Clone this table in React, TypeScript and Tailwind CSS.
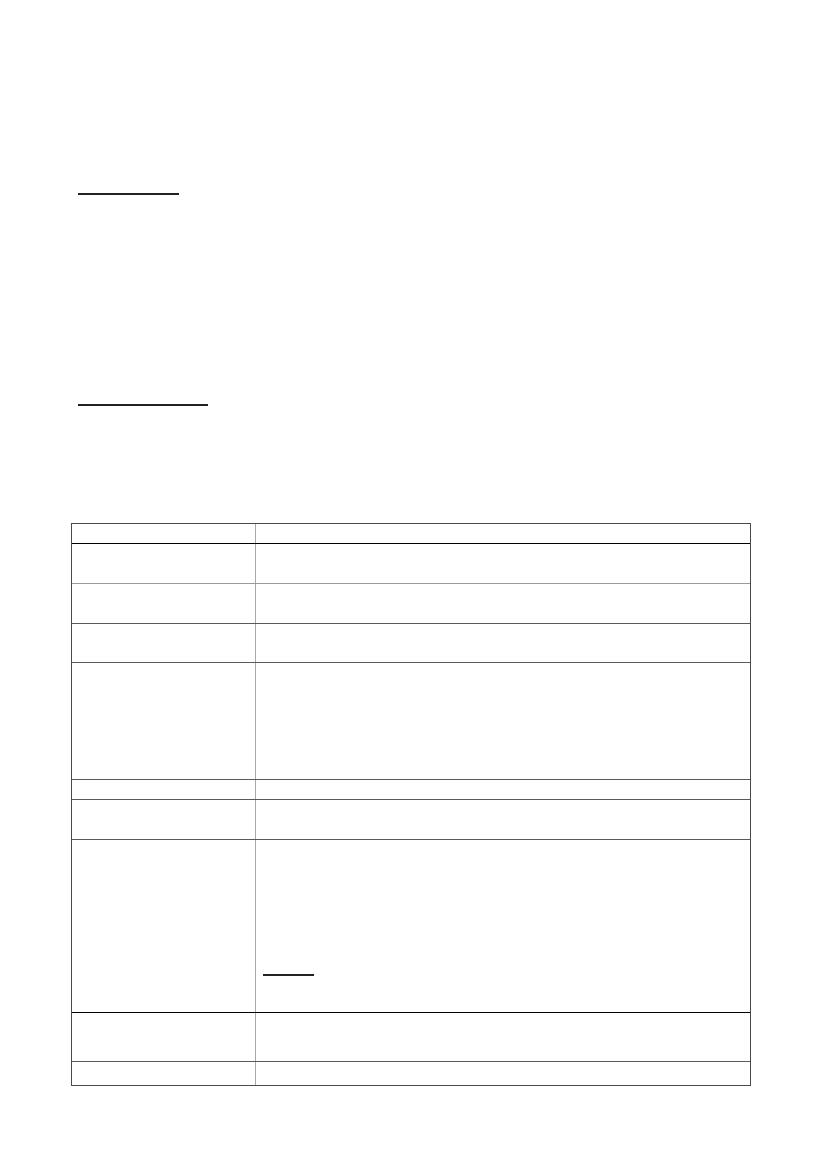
const rows = [
  { h: 'h-[20px]', line: 'border-black' },
  { h: 'h-[40px]', line: 'border-[#9a9a9a]' },
  { h: 'h-[40px]', line: 'border-[#5a5a5a]' },
  { h: 'h-[39px]', line: 'border-[#5a5a5a]' },
  { h: 'h-[117px]', line: 'border-[#5a5a5a]' },
  { h: 'h-[20px]', line: 'border-[#5a5a5a]' },
  { h: 'h-[40px]', line: 'border-[#5a5a5a]' },
  { h: 'h-[173px]', line: 'border-black', underline: true },
  { h: 'h-[49px]', line: 'border-[#5a5a5a]' },
];

const App = () => {
  return (
    <div className="min-h-[1169px] w-[827px] bg-white font-['Liberation_Sans',sans-serif] text-black">
      <div className="pt-[193px] pl-[78px]">
        <div className="w-[101px] h-[2px] bg-[#222]"></div>
        <div className="mt-[209px] w-[130px] h-[2px] bg-[#222]"></div>
      </div>

      <div className="mt-[117px] ml-[71px] w-[680px] border border-[#4a4a4a]">
        {rows.map((row, i) => (
          <div key={i} className={`grid grid-cols-[184px_1fr] ${row.h} border-b ${row.line}`}>
            <div className="border-r border-[#a8a8a8]"></div>
            <div>
              {row.underline && <div className="mt-[134px] ml-[7px] w-[51px] h-[2px] bg-[#222]"></div>}
            </div>
          </div>
        ))}
        <div className="grid grid-cols-[184px_1fr] h-[23px]">
          <div className="border-r border-[#a8a8a8]"></div>
          <div></div>
        </div>
      </div>
    </div>
  );
};

export default App;
